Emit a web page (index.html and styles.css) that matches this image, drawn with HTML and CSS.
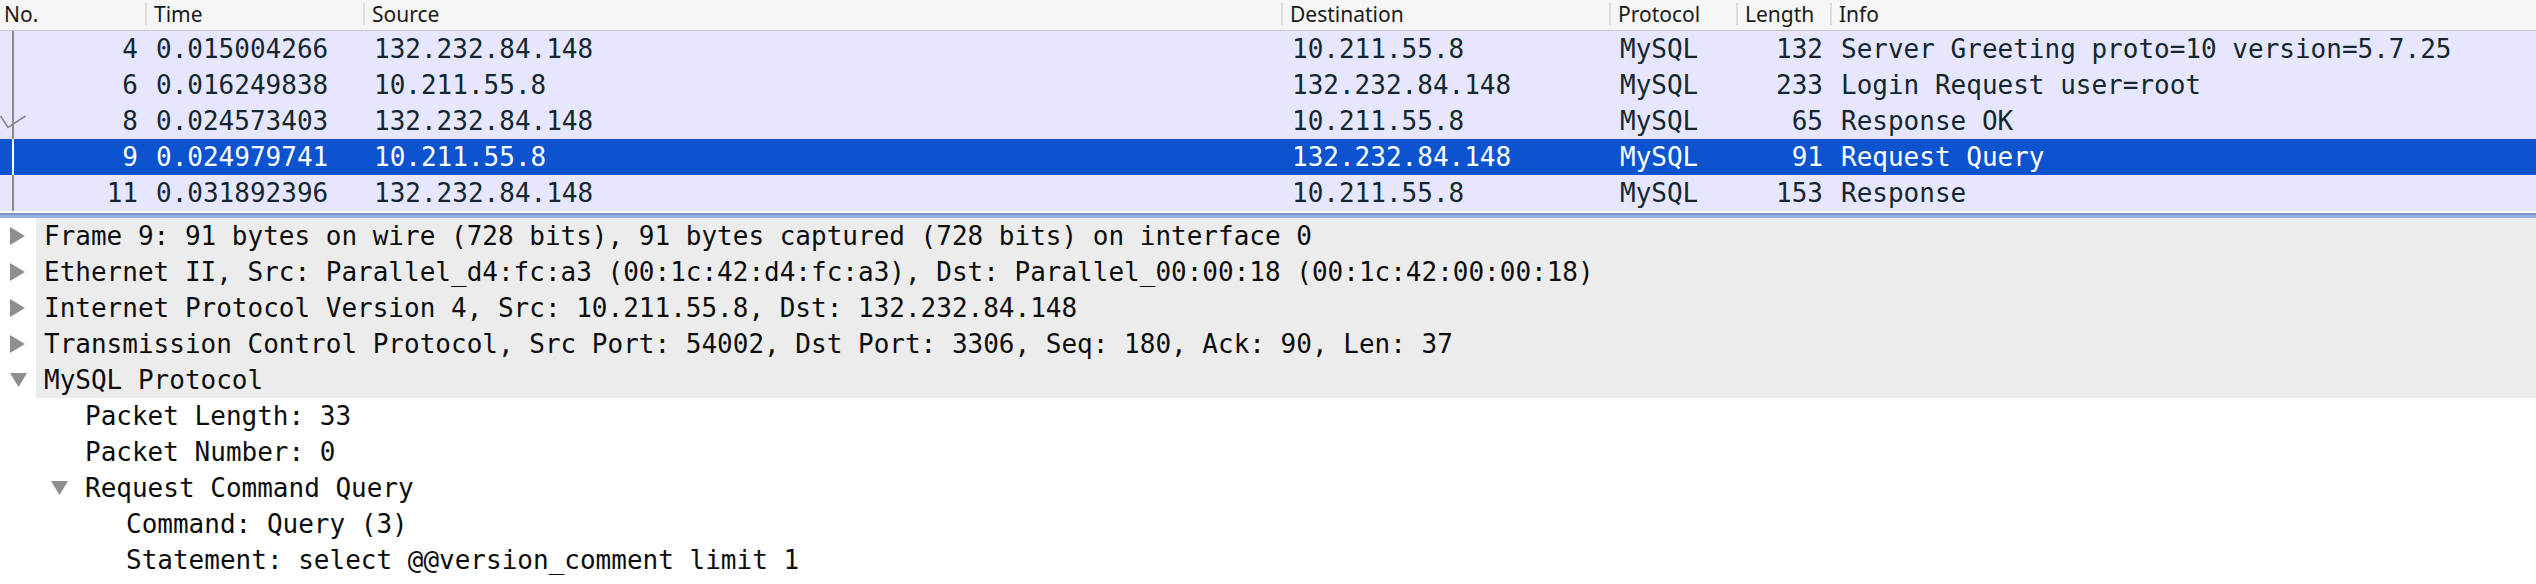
FILE: index.html
```html
<!DOCTYPE html>
<html>
<head>
<meta charset="utf-8">
<link rel="stylesheet" href="styles.css">
</head>
<body>
<div class="app">
  <div class="packet-list">
    <div class="plist-header">
      <div class="hcell">No.</div>
      <div class="hcell">Time</div>
      <div class="hcell">Source</div>
      <div class="hcell">Destination</div>
      <div class="hcell">Protocol</div>
      <div class="hcell">Length</div>
      <div class="hcell last">Info</div>
    </div>
    <div class="plist-rows">
      <div class="prow">
        <div class="cell num rel">4</div><div class="cell">0.015004266</div><div class="cell">132.232.84.148</div><div class="cell">10.211.55.8</div><div class="cell">MySQL</div><div class="cell num">132</div><div class="cell">Server Greeting proto=10 version=5.7.25</div>
      </div>
      <div class="prow">
        <div class="cell num rel">6</div><div class="cell">0.016249838</div><div class="cell">10.211.55.8</div><div class="cell">132.232.84.148</div><div class="cell">MySQL</div><div class="cell num">233</div><div class="cell">Login Request user=root</div>
      </div>
      <div class="prow">
        <div class="cell num rel">
          <svg class="check" width="28" height="36" viewBox="0 0 28 36"><polyline points="0.5,13 8,24.5 25.5,13" fill="none" stroke="#8a8a8a" stroke-width="1.6"/></svg>8</div><div class="cell">0.024573403</div><div class="cell">132.232.84.148</div><div class="cell">10.211.55.8</div><div class="cell">MySQL</div><div class="cell num">65</div><div class="cell">Response OK</div>
      </div>
      <div class="prow selected">
        <div class="cell num rel">9</div><div class="cell">0.024979741</div><div class="cell">10.211.55.8</div><div class="cell">132.232.84.148</div><div class="cell">MySQL</div><div class="cell num">91</div><div class="cell">Request Query</div>
      </div>
      <div class="prow">
        <div class="cell num rel">11</div><div class="cell">0.031892396</div><div class="cell">132.232.84.148</div><div class="cell">10.211.55.8</div><div class="cell">MySQL</div><div class="cell num">153</div><div class="cell">Response</div>
      </div>
    </div>
  </div>
  <div class="splitter"></div>
  <div class="tree">
    <div class="trow top lvl0">
      <div class="branch"><svg class="tri" width="16" height="18" viewBox="0 0 16 18"><polygon points="0,0 15,9 0,18" fill="#8e8e8e"/></svg></div>
      <div class="label">Frame 9: 91 bytes on wire (728 bits), 91 bytes captured (728 bits) on interface 0</div>
    </div>
    <div class="trow top lvl0">
      <div class="branch"><svg class="tri" width="16" height="18" viewBox="0 0 16 18"><polygon points="0,0 15,9 0,18" fill="#8e8e8e"/></svg></div>
      <div class="label">Ethernet II, Src: Parallel_d4:fc:a3 (00:1c:42:d4:fc:a3), Dst: Parallel_00:00:18 (00:1c:42:00:00:18)</div>
    </div>
    <div class="trow top lvl0">
      <div class="branch"><svg class="tri" width="16" height="18" viewBox="0 0 16 18"><polygon points="0,0 15,9 0,18" fill="#8e8e8e"/></svg></div>
      <div class="label">Internet Protocol Version 4, Src: 10.211.55.8, Dst: 132.232.84.148</div>
    </div>
    <div class="trow top lvl0">
      <div class="branch"><svg class="tri" width="16" height="18" viewBox="0 0 16 18"><polygon points="0,0 15,9 0,18" fill="#8e8e8e"/></svg></div>
      <div class="label">Transmission Control Protocol, Src Port: 54002, Dst Port: 3306, Seq: 180, Ack: 90, Len: 37</div>
    </div>
    <div class="trow top lvl0">
      <div class="branch"><svg class="tri" width="18" height="16" viewBox="0 0 18 16"><polygon points="0,1 17,1 8.5,15" fill="#8e8e8e"/></svg></div>
      <div class="label">MySQL Protocol</div>
    </div>
    <div class="trow lvl1">
      <div class="branch"></div>
      <div class="label">Packet Length: 33</div>
    </div>
    <div class="trow lvl1">
      <div class="branch"></div>
      <div class="label">Packet Number: 0</div>
    </div>
    <div class="trow lvl1">
      <div class="branch"><svg class="tri" width="18" height="16" viewBox="0 0 18 16"><polygon points="0,1 17,1 8.5,15" fill="#8e8e8e"/></svg></div>
      <div class="label">Request Command Query</div>
    </div>
    <div class="trow lvl2">
      <div class="branch"></div>
      <div class="label">Command: Query (3)</div>
    </div>
    <div class="trow lvl2">
      <div class="branch"></div>
      <div class="label">Statement: select @@version_comment limit 1</div>
    </div>
  </div>
</div>
</body>
</html>
```
FILE: styles.css
```css
html, body {
  margin: 0;
  padding: 0;
  background: #ffffff;
  overflow: hidden;
}

.app {
  width: 2536px;
  height: 584px;
  display: flex;
  flex-direction: column;
}

.packet-list {
  background: #e7e6ff;
}

.plist-header {
  display: grid;
  grid-template-columns: 147px 218px 918px 328px 127px 94px 1fr;
  height: 30px;
  background: #f6f6f6;
  border-bottom: 1px solid #c8c8c8;
  font-family: "Noto Sans", "Liberation Sans", sans-serif;
  font-size: 21px;
  color: #1a1a1a;
}

.hcell {
  display: flex;
  align-items: center;
  padding-left: 7px;
  border-right: 2px solid #dcdcdc;
  margin: 3px 0 5px 0;
  line-height: 22px;
}

.hcell:first-child {
  padding-left: 4px;
}

.hcell.last {
  border-right: none;
}

.plist-rows {
  display: flex;
  flex-direction: column;
}

.prow {
  display: grid;
  grid-template-columns: 147px 218px 918px 328px 127px 94px 1fr;
  height: 36px;
  font-family: "DejaVu Sans Mono", monospace;
  font-size: 26px;
  line-height: 36px;
  color: #12272e;
  white-space: nowrap;
}

.prow.selected {
  background: #0b53cf;
  color: #ffffff;
}

.cell {
  padding: 0 9px;
  overflow: hidden;
}

.cell.num {
  text-align: right;
  padding-right: 9px;
}

.cell.rel {
  position: relative;
}

.cell.rel::before {
  content: "";
  position: absolute;
  left: 12px;
  top: 0;
  bottom: 0;
  width: 2px;
  background: #8a8a8a;
}

.prow.selected .cell.rel::before {
  background: #ffffff;
}

.check {
  position: absolute;
  left: 0;
  top: 0;
}

.splitter {
  height: 7px;
  background: linear-gradient(to bottom, #ffffff 0, #ffffff 2px, #7f94c3 2px, #7f94c3 4px, #96b0e0 4px, #96b0e0 7px);
}

.tree {
  flex: 1;
  display: flex;
  flex-direction: column;
  background: #ffffff;
  font-family: "DejaVu Sans Mono", monospace;
  font-size: 26px;
  color: #0d0d0d;
  white-space: nowrap;
}

.trow {
  display: flex;
  height: 36px;
  line-height: 36px;
}

.trow.lvl1 {
  padding-left: 41px;
}

.trow.lvl2 {
  padding-left: 82px;
}

.branch {
  width: 36px;
  flex: none;
  display: flex;
  align-items: center;
  padding-left: 10px;
  box-sizing: border-box;
}

.label {
  flex: 1;
  padding-left: 8px;
}

.trow.top .label {
  background: #ececec;
}
```
